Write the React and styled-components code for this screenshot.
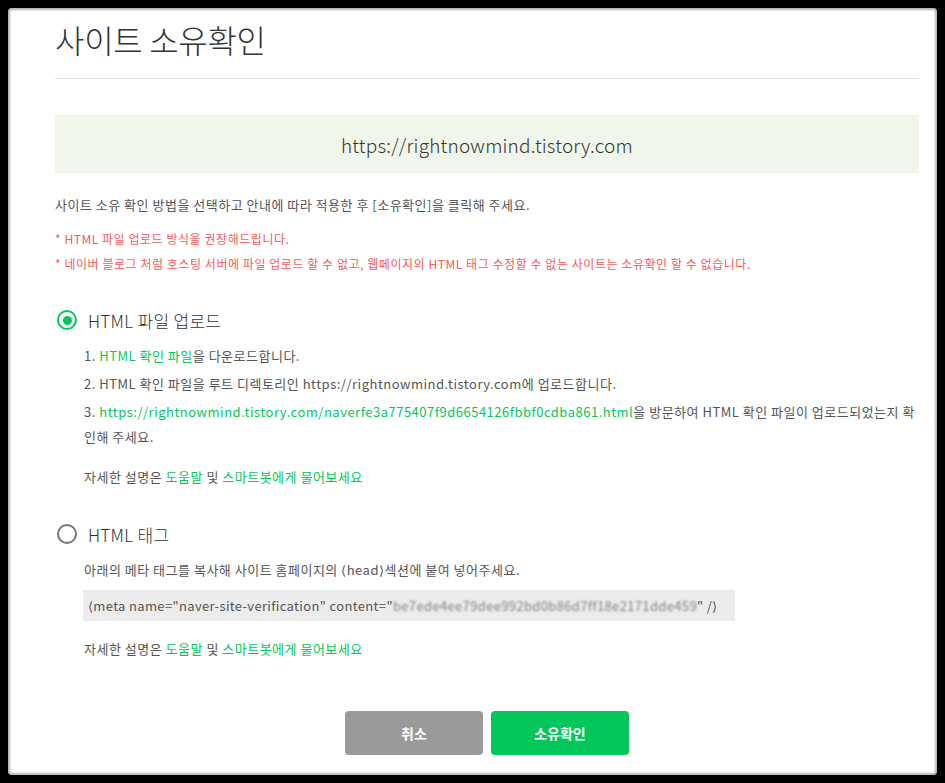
import React from "react";
import styled, { createGlobalStyle } from "styled-components";

const GlobalStyle = createGlobalStyle`
  html, body {
    margin: 0;
    padding: 0;
    background: #000;
  }
  body {
    font-family: "Noto Sans CJK KR", "Noto Sans", sans-serif;
  }
`;

const Frame = styled.div`
  width: 945px;
  height: 783px;
  box-sizing: border-box;
  padding: 8px;
  background: #000;
`;

const Card = styled.div`
  height: 100%;
  box-sizing: border-box;
  background: #fff;
  border-radius: 4px;
  box-shadow: inset 0 0 2px 2px rgba(120, 120, 120, 0.55);
  padding: 9px 18px 0 47px;
  display: flex;
  flex-direction: column;
`;

const Title = styled.h1`
  margin: 0;
  font-size: 32px;
  line-height: 44px;
  font-weight: 300;
  color: #333;
  letter-spacing: -0.3px;
  padding-bottom: 17px;
  border-bottom: 1px solid #e1e1e1;
`;

const SiteBox = styled.div`
  margin-top: 36px;
  height: 58px;
  display: flex;
  align-items: center;
  justify-content: center;
  background: #f0f6e9;
  font-size: 19px;
  font-weight: 300;
  letter-spacing: 0.2px;
  color: #333;
`;

const Text = styled.p`
  margin: ${(p) => p.$mt || 0}px 0 0;
  padding-left: ${(p) => (p.$indent ? 29 : 0)}px;
  font-size: ${(p) => p.$size || 13}px;
  line-height: ${(p) => p.$lh || 20}px;
  color: ${(p) => p.$color || "#555"};
  letter-spacing: ${(p) => p.$ls ?? 0.5}px;
`;

const Link = styled.span`
  color: #03c75a;
`;

const OptionRow = styled.label`
  margin-top: ${(p) => p.$mt}px;
  height: 24px;
  display: flex;
  align-items: center;
  gap: 11px;
  font-size: 17px;
  font-weight: 300;
  letter-spacing: 0.3px;
  color: #333;
  padding-left: 2px;
`;

const Radio = styled.span`
  width: 20px;
  height: 20px;
  box-sizing: border-box;
  border-radius: 50%;
  border: ${(p) => (p.$on ? "2.5px solid #03c75a" : "2px solid #777")};
  display: flex;
  align-items: center;
  justify-content: center;
  &::after {
    content: "";
    display: ${(p) => (p.$on ? "block" : "none")};
    width: 9px;
    height: 9px;
    border-radius: 50%;
    background: #03c75a;
  }
`;

const Steps = styled.ol`
  list-style: none;
  margin: 11px 0 0;
  padding: 0 0 0 29px;
  display: flex;
  flex-direction: column;
  gap: 3px;
`;

const Step = styled.li`
  font-size: 13px;
  line-height: 25px;
  color: #555;
  letter-spacing: 0.5px;
  word-break: break-all;
`;

const Blurred = styled.span`
  filter: blur(0.9px);
  opacity: 0.7;
`;

const CodeBox = styled.div`
  margin: 8px 0 0 28px;
  width: 652px;
  height: 31px;
  box-sizing: border-box;
  padding-left: 5px;
  display: flex;
  align-items: center;
  background: #ececec;
  font-size: 13px;
  color: #555;
  letter-spacing: 0.35px;
  white-space: nowrap;
  overflow: hidden;
`;

const Buttons = styled.div`
  margin-top: 50px;
  display: flex;
  justify-content: center;
  gap: 8px;
`;

const Button = styled.button`
  width: 138px;
  height: 44px;
  border: none;
  border-radius: 4px;
  background: ${(p) => (p.$primary ? "#03c75a" : "#9a9a9a")};
  color: #fff;
  font-family: inherit;
  font-size: 14px;
  font-weight: 700;
  cursor: pointer;
`;

function HelpLine({ mt }) {
  return (
    <Text $indent $mt={mt} $lh={25}>
      자세한 설명은 <Link>도움말</Link> 및 <Link>스마트봇에게 물어보세요</Link>
    </Text>
  );
}

export default function App() {
  return (
    <>
      <GlobalStyle />
      <Frame>
        <Card>
          <Title>사이트 소유확인</Title>
          <SiteBox>https://rightnowmind.tistory.com</SiteBox>
          <Text $mt={22}>
            사이트 소유 확인 방법을 선택하고 안내에 따라 적용한 후 [소유확인]을 클릭해 주세요.
          </Text>
          <Text $mt={14} $size={12} $color="#f45b5b" $ls={0.55}>
            * HTML 파일 업로드 방식을 권장해드립니다.
          </Text>
          <Text $mt={5} $size={12} $color="#f45b5b" $ls={0.55}>
            * 네이버 블로그 처럼 호스팅 서버에 파일 업로드 할 수 없고, 웹페이지의 HTML 태그 수정할 수 없는 사이트는 소유확인 할 수 없습니다.
          </Text>

          <OptionRow $mt={34}>
            <Radio $on />
            HTML 파일 업로드
          </OptionRow>
          <Steps>
            <Step>
              1. <Link>HTML 확인 파일</Link>을 다운로드합니다.
            </Step>
            <Step>2. HTML 확인 파일을 루트 디렉토리인 https://rightnowmind.tistory.com에 업로드합니다.</Step>
            <Step>
              3. <Link>https://rightnowmind.tistory.com/naverfe3a775407f9d6654126fbbf0cdba861.html</Link>을 방문하여 HTML 확인 파일이 업로드되었는지 확인해 주세요.
            </Step>
          </Steps>
          <HelpLine mt={15} />

          <OptionRow $mt={33}>
            <Radio />
            HTML 태그
          </OptionRow>
          <Text $indent $mt={11} $lh={25}>
            아래의 메타 태그를 복사해 사이트 홈페이지의 ⟨head⟩섹션에 붙여 넣어주세요.
          </Text>
          <CodeBox>
            ⟨meta name="naver-site-verification" content="<Blurred>be7ede4ee79dee992bd0b86d7ff18e2171dde459</Blurred>" /⟩
          </CodeBox>
          <HelpLine mt={15} />

          <Buttons>
            <Button>취소</Button>
            <Button $primary>소유확인</Button>
          </Buttons>
        </Card>
      </Frame>
    </>
  );
}
